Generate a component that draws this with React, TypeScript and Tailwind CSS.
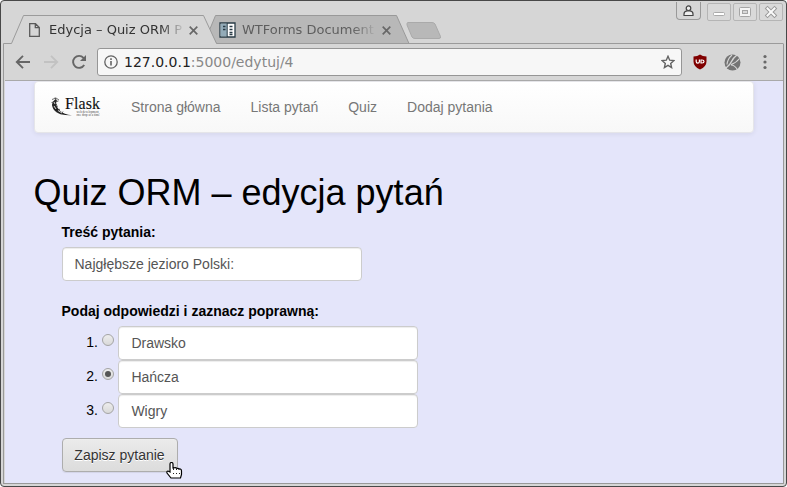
import React from "react";

const answers = ["Drawsko", "Hańcza", "Wigry"];
const links = ["Strona główna", "Lista pytań", "Quiz", "Dodaj pytania"];

function TabShapes() {
  return (
    <svg className="absolute left-0 top-0" width="787" height="44" viewBox="0 0 787 44" fill="none">
      <path d="M209.500 30L215.500 15.500H396.500L409 43.500H216.500Z" fill="#b8b8b8" stroke="#999" />
      <path d="M3 43.500H11.500L23.500 15.500H203.500L216.500 43.500V44H3Z" fill="#d6d6d6" />
      <path d="M3.500 44V43.500H11.500L23.500 15.500H203.500L216.500 43.500H783.500" stroke="#9b9b9b" />
      <path d="M408 22.500H432Q434 22.500 435 24L440.500 36.500Q441 38.500 439 38.500H415Q413 38.500 412 37L407 25Q406.500 22.500 408 22.500Z" fill="#b8b8b8" stroke="#aaa" />
    </svg>
  );
}

function TabClose() {
  return (
    <svg width="9" height="9" viewBox="0 0 9 9" stroke="#686868" strokeWidth="1.700">
      <path d="M.7.700l7.600 7.600M8.300.700L.7 8.300" />
    </svg>
  );
}

function WindowButton({ children }: { children: React.ReactNode }) {
  return (
    <div className="h-[18px] w-[24px] rounded-[2px] border border-[#b5b5b5] bg-[#d9d9d9]">
      <svg width="22" height="16" viewBox="0 0 22 16" fill="none">{children}</svg>
    </div>
  );
}

function TabStrip() {
  return (
    <header className="relative flex h-[44px] shrink-0">
      <TabShapes />
      <div className="relative flex w-full pt-[15px] font-['DejaVu_Sans',sans-serif] text-[13px] leading-[29px]">
        <div className="flex w-[217px] items-center pl-[29px]">
          <svg width="11" height="14" viewBox="0 0 11 14" fill="none" stroke="#5a5a5a" strokeWidth="1.300">
            <path d="M.7.700h5.800l3.800 3.800v8.800H.7zM6.300.700v4h4" />
          </svg>
          <span className="ml-[9px] h-[29px] w-[133px] whitespace-nowrap text-[#333] [mask-image:linear-gradient(to_right,#000_112px,transparent_136px)]">
            Edycja – Quiz ORM P
          </span>
          <span className="ml-[7px] mt-px"><TabClose /></span>
        </div>
        <div className="flex items-center pl-[2px]">
          <svg width="18" height="16" viewBox="0 0 18 16">
            <path d="M1 1h15v14H1z" fill="#fff" stroke="#283b46" strokeWidth="1.300" />
            <path d="M1.700 1.700H8v12.600H1.700z" fill="#93abb8" />
            <path d="M8.200 1v14" stroke="#283b46" />
            <path d="M4 4.500h2.500M4 7.500h2.500M10.500 4.500h3M10.500 7.500h3M10.500 10.500h3M10.500 12.500h3" stroke="#283b46" strokeWidth="1.300" />
          </svg>
          <span className="ml-[5px] h-[29px] w-[133px] whitespace-nowrap text-[#5e5e5e] [mask-image:linear-gradient(to_right,#000_110px,transparent_136px)]">
            WTForms Document
          </span>
          <span className="ml-[7px] mt-px"><TabClose /></span>
        </div>
      </div>
      <div className="absolute right-0 top-0 flex">
        <div className="mr-[6px] mt-[2px] h-[18px] w-[25px] rounded-b-[4px] border border-t-0 border-[#999] bg-[#d6d6d6]">
          <svg width="23" height="17" viewBox="0 0 23 17" fill="none" stroke="#444" strokeWidth="1.200">
            <circle cx="11.500" cy="6.200" r="2.300" fill="#eee" />
            <path d="M7 13.500V12q0-2.700 3-3.200h3q3 .5 3 3.200v1.500z" fill="#eee" />
          </svg>
        </div>
        <div className="mr-[4px] mt-[3px] flex gap-[2px]">
          <WindowButton>
            <rect x="5.500" y="8.500" width="11" height="3" rx="1" fill="#fff" stroke="#aaa" />
          </WindowButton>
          <WindowButton>
            <rect x="5.500" y="3.500" width="11" height="9" rx="1" fill="#f4f4f4" stroke="#a5a5a5" />
            <rect x="8.500" y="6.500" width="5" height="3" fill="#d9d9d9" stroke="#a5a5a5" />
          </WindowButton>
          <WindowButton>
            <path d="M7.500 4.500l7 7M14.500 4.500l-7 7" stroke="#999" strokeWidth="3.900" strokeLinecap="square" />
            <path d="M7.500 4.500l7 7M14.500 4.500l-7 7" stroke="#fafafa" strokeWidth="2" strokeLinecap="square" />
          </WindowButton>
        </div>
      </div>
    </header>
  );
}

function Toolbar() {
  return (
    <div className="flex h-[37px] shrink-0 items-center border-b border-[#a9a9a9]">
      <svg className="ml-[10px]" width="76" height="16" viewBox="0 0 76 16" fill="none" strokeWidth="1.900">
        <path d="M15 8H2M8 1.800L1.800 8 8 14.200" stroke="#666" />
        <path d="M29 8h13M36 1.800L42.200 8 36 14.200" stroke="#c2c2c2" />
        <path d="M69.200 11A6 6 0 1 1 68.500 3.800L70 5.500" stroke="#666" />
        <path d="M71 1v6h-6z" fill="#666" />
      </svg>
      <div className="ml-[6px] flex h-[28px] w-[585px] items-center rounded-[3px] border border-[#969696] bg-[#f7f7f7] pl-[6px] pr-[6px]">
        <svg width="14" height="14" viewBox="0 0 14 14" fill="none" stroke="#636363">
          <circle cx="7" cy="7" r="6.200" strokeWidth="1.300" />
          <path d="M7 6v4.500M7 3.200v1.700" strokeWidth="1.600" />
        </svg>
        <span className="ml-[6px] font-['DejaVu_Sans',sans-serif] text-[14px] leading-[20px] text-[#222]">
          127.0.0.1<span className="text-[#888]">:5000/edytuj/4</span>
        </span>
        <svg className="ml-auto" width="14" height="14" viewBox="0 0 14 14" fill="none" stroke="#636363" strokeWidth="1.400">
          <path d="M7 1.300l1.700 3.900 4.200.400-3.200 2.800.9 4.200L7 10.400l-3.600 2.200.9-4.200L1.100 5.600l4.200-.400z" />
        </svg>
      </div>
      <svg className="ml-[10px]" width="16" height="16" viewBox="0 0 16 16">
        <path d="M8 .5q2.500 2 6.500 2v5q0 5-6.500 8-6.500-3-6.500-8v-5q4 0 6.500-2z" fill="#800000" />
        <path d="M4.200 5.600v2q0 1.600 1.600 1.600t1.600-1.600v-2M9 6h1q2 0 2 1.500T10 9H9z" fill="none" stroke="#fff" strokeWidth="1.200" />
      </svg>
      <svg className="ml-[16px]" width="17" height="17" viewBox="0 0 17 17" fill="none">
        <circle cx="8.500" cy="8.500" r="8" fill="#747474" />
        <path d="M2 14Q6 11 7.500 7.500T13 1" stroke="#d6d6d6" strokeWidth="1.400" />
        <path d="M3 10.500Q3.500 5 8 1M7 10.500Q12 9 15.500 4.500M7 11q3.500 0 6.500 4.500" stroke="#d6d6d6" strokeWidth="1.100" />
      </svg>
      <svg className="ml-[21.5px]" width="4" height="16" viewBox="0 0 4 16" fill="#686868">
        <circle cx="2" cy="2.500" r="1.600" /><circle cx="2" cy="8" r="1.600" /><circle cx="2" cy="13.500" r="1.600" />
      </svg>
    </div>
  );
}

function FlaskLogo() {
  return (
    <svg width="50" height="20" viewBox="0 0 50 20" className="overflow-visible">
      <path d="M4.500 2Q1.500 4 1 8q.5 4.500 5 7.500 5 3.300 15 2.700-8-.700-12-4.500Q4 9 5.500 3.500z" fill="#222" />
      <path d="M1 2.500l4-1.500 3 2M.5 5.500l7-1.500M1 8.500l5-1M2 11l5-2M5 15l4-3M10 17.500l2-3M4 .5l2 4" stroke="#333" strokeWidth=".7" fill="none" />
      <path d="M3 5l1 2M3 9l2 3M7 13.500l4 2.500" stroke="#fff" strokeWidth=".8" />
      <text x="14" y="12" fontFamily="Liberation Serif, serif" fontSize="16" textLength="35" lengthAdjust="spacing" fill="#111" stroke="#111" strokeWidth=".1">Flask</text>
      <text x="25.500" y="15.900" fontFamily="Liberation Serif, serif" fontSize="3" textLength="23" fill="#444">web development,</text>
      <text x="25.500" y="19" fontFamily="Liberation Serif, serif" fontSize="3" textLength="23" fill="#444">one drop at a time</text>
    </svg>
  );
}

function Field({ value }: { value: string }) {
  return (
    <input
      type="text"
      defaultValue={value}
      className="h-[34px] w-[300px] rounded-[4px] border border-[#ccc] bg-white px-[12px] text-[14px] text-[#555] shadow-[inset_0_1px_1px_rgba(0,0,0,.075)] outline-none"
    />
  );
}

function Radio({ checked }: { checked: boolean }) {
  return (
    <span role="radio" aria-checked={checked} className="mb-[6px] mr-[4.4px] flex size-[12px] items-center justify-center rounded-full border border-[#a4a4a4] bg-linear-to-b from-[#ededed] to-[#d9d9d9]">
      {checked && <span className="size-[6px] rounded-full bg-[#555]" />}
    </span>
  );
}

function Page() {
  return (
    <main className="relative min-h-0 grow overflow-hidden bg-[#e4e5fa] px-[28.5px] font-['Liberation_Sans',Arial,sans-serif] text-[14px] leading-[20px] text-black">
      <nav className="flex h-[52px] w-[720px] items-center rounded-[4px] border border-[#e5e5e9] bg-linear-to-b from-white to-[#f8f8f8] shadow-[0_1px_5px_rgba(0,0,0,.075)]">
        <div className="ml-[16px]"><FlaskLogo /></div>
        <div className="ml-[30.5px] flex gap-[30px] text-[#777]">
          {links.map((link) => <a key={link}>{link}</a>)}
        </div>
      </nav>
      <h1 className="mt-[40px] text-[36px] leading-[39px]">Quiz ORM – edycja pytań</h1>
      <form className="ml-[28px]">
        <label className="mt-[10px] block font-bold">Treść pytania:</label>
        <div className="mt-[5px] flex"><Field value="Najgłębsze jezioro Polski:" /></div>
        <p className="mt-[20px] font-bold">Podaj odpowiedzi i zaznacz poprawną:</p>
        <ol className="mt-[5px]">
          {answers.map((answer, index) => (
            <li key={answer} className="flex h-[34px] items-center">
              <span className="mb-[2px] mr-[4px] w-[36.5px] text-right">{index + 1}.</span>
              <Radio checked={index === 1} />
              <Field value={answer} />
            </li>
          ))}
        </ol>
        <button type="button" className="mt-[10px] flex h-[34px] w-[116px] items-center justify-center rounded-[4px] border border-[#adadad] bg-linear-to-b from-[#ebebeb] to-[#dcdcdc] text-[#333] shadow-[inset_0_1px_0_rgba(255,255,255,.15),0_1px_1px_rgba(0,0,0,.075)] [text-shadow:0_1px_0_#fff]">
          Zapisz pytanie
        </button>
      </form>
      <svg className="absolute left-[161px] top-[381px]" width="17" height="17" viewBox="0 0 17 17">
        <path d="M4 10V2q0-1.500 1.500-1.500T7 2v4q3-1 4 .5 1.500-.5 2.200.5 2.300-.3 2.300 2v3.500l-1 3.500H5L1 11q-.5-2 1-2z" fill="#fff" stroke="#000" strokeWidth="1.200" />
        <path d="M7 11.500h1M10 11.500h1M13 11.500h1M7.500 6v2M10.500 7v1M13 7v1" stroke="#222" />
      </svg>
    </main>
  );
}

export default function App() {
  return (
    <div className="h-[487px] w-[787px] bg-white">
      <div className="relative flex h-full flex-col overflow-hidden rounded-[4px] border border-[#484848] bg-[#d6d6d6]">
        <div className="-ml-px -mr-px -mt-px shrink-0"><TabStrip /></div>
        <div className="mx-[2px] mb-[2px] flex min-h-0 grow flex-col border-x border-b border-[#999]">
          <div className="flex min-h-0 grow flex-col border-l border-[#d6d6d6]">
            <Toolbar />
            <Page />
          </div>
        </div>
      </div>
    </div>
  );
}
